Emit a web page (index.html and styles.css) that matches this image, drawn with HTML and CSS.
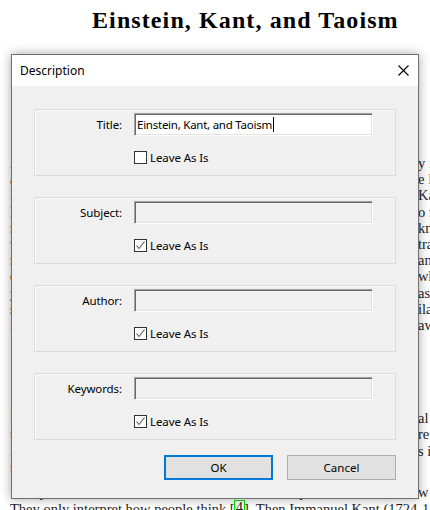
FILE: index.html
```html
<!DOCTYPE html>
<html>
<head>
<meta charset="utf-8">
<link rel="stylesheet" href="styles.css">
</head>
<body>
<div class="doc">
  <div class="doc-title">Einstein, Kant, and Taoism</div>
  <div class="doc-author">A. N. Author</div>
  <div class="abstract">
    <div class="ln"><span class="lead">Abstract. It is argued that the theory of relativity shows how the mind orders experience, and this is why</span><span>y in</span></div>
    <div class="ln"><span class="lead">ancient thinkers of the East arrived at a similar picture of the world long before the</span><span>e <span class="c1">I</span>n</span></div>
    <div class="ln"><span class="lead">Immanuel Kant described space and time as forms of intuition, and after him</span><span>Ka</span></div>
    <div class="ln"><span class="lead">Einstein showed that they are relative to the observer, who has to</span><span>o m</span></div>
    <div class="ln"><span class="lead">measure them; both rest on the observer's own structure of</span><span>kno</span></div>
    <div class="ln"><span class="lead">wledge, which the Taoist sages regarded as the key to an</span><span>tra</span></div>
    <div class="ln"><span class="lead">nsformation of the self and the world, one in which humans</span><span>an</span></div>
    <div class="ln"><span class="lead">d heaven are joined. This paper compares the three views, and shows</span><span>wh</span></div>
    <div class="ln"><span class="lead">y the philosophers of the West and the sages of the E</span><span>ast</span></div>
    <div class="ln"><span class="lead">share a common ground, which is found in the sim</span><span>ilar</span></div>
    <div class="ln"><span class="lead">ity of their methods and of the conclusions they dr</span><span>aw</span></div>
  </div>
  <div class="heading">1&nbsp;&nbsp;&nbsp;Introduction</div>
  <div class="para">
    <div class="ln"><span class="lead"><span class="c1">I</span>n the history of science, physicists often discover the laws that are actu</span><span>al</span></div>
    <div class="ln"><span class="lead"><span class="c2">t</span>he rules by which people think, and so their theories are mo</span><span>re</span></div>
    <div class="ln"><span class="lead"><span class="c3">I</span>n this sense, the theory of relativity i</span><span>s in</span></div>
    <div class="ln"><span class="lead"><span class="c2">t</span>he light of Kant's philosophy.</span></div>
  </div>
  <div class="para para2">
    <div class="ln"><span class="lead">&nbsp;&nbsp;&nbsp;&nbsp;Physicists do not describe the world as it is; they describe ho</span><span>w</span></div>
    <div class="ln">They only interpret how people think&nbsp;[<span class="cite">4</span>]. Then Immanuel Kant (1724-1804) said</div>
  </div>
</div>

<div class="dialog">
  <div class="titlebar">
    <span class="dlg-title">Description</span>
    <svg class="close" width="11" height="11" viewBox="0 0 11 11"><path d="M0.5 0.5 L10.5 10.5 M10.5 0.5 L0.5 10.5" stroke="#000" stroke-width="1.1" fill="none"/></svg>
  </div>
  <div class="dlg-body">
    <div class="group">
      <label class="lbl">Title:</label>
      <div class="field active">Einstein, Kant, and Taoism<span class="caret"></span></div>
      <div class="check-row">
        <span class="box"></span><span class="chk-label">Leave As Is</span>
      </div>
    </div>
    <div class="group">
      <label class="lbl">Subject:</label>
      <div class="field"></div>
      <div class="check-row">
        <span class="box"><svg width="11" height="11" viewBox="0 0 11 11"><path d="M1.5 5.5 L4 8.5 L9.5 1.5" stroke="#555" stroke-width="1.1" fill="none"/></svg></span><span class="chk-label">Leave As Is</span>
      </div>
    </div>
    <div class="group">
      <label class="lbl">Author:</label>
      <div class="field"></div>
      <div class="check-row">
        <span class="box"><svg width="11" height="11" viewBox="0 0 11 11"><path d="M1.5 5.5 L4 8.5 L9.5 1.5" stroke="#555" stroke-width="1.1" fill="none"/></svg></span><span class="chk-label">Leave As Is</span>
      </div>
    </div>
    <div class="group">
      <label class="lbl">Keywords:</label>
      <div class="field"></div>
      <div class="check-row">
        <span class="box"><svg width="11" height="11" viewBox="0 0 11 11"><path d="M1.5 5.5 L4 8.5 L9.5 1.5" stroke="#555" stroke-width="1.1" fill="none"/></svg></span><span class="chk-label">Leave As Is</span>
      </div>
    </div>
    <div class="buttons">
      <button class="btn btn-default">OK</button>
      <button class="btn">Cancel</button>
    </div>
  </div>
</div>
</body>
</html>
```

FILE: styles.css
```css
html, body {
  margin: 0;
  padding: 0;
  background: #fff;
  overflow: hidden;
  width: 430px;
  height: 510px;
}

.doc {
  position: relative;
  padding-left: 10px;
  font-family: "Liberation Serif", "Times New Roman", serif;
  font-size: 14.5px;
  color: #1e1e1e;
}

.doc-title {
  padding-top: 5px;
  margin-left: 82px;
  font-size: 24px;
  line-height: 30px;
  font-weight: bold;
  letter-spacing: 1.1px;
  white-space: nowrap;
  color: #000;
}

.doc-author {
  margin-top: 19px;
  margin-left: 205px;
  font-size: 14px;
  line-height: 16px;
  white-space: nowrap;
}

.abstract {
  margin-top: 85px;
}

.abstract .ln {
  line-height: 16.2px;
}

.ln {
  display: flex;
  white-space: nowrap;
  line-height: 16.6px;
}

.lead {
  display: block;
  width: 408px;
  flex: none;
  overflow: hidden;
}

.heading {
  margin-top: 45px;
  font-size: 17px;
  font-weight: bold;
  line-height: 20px;
}

.para {
  margin-top: 11.5px;
}

.para2 {
  margin-top: 8px;
}

.c1 { color: #c8781e; }
.c2 { color: #6a2a8a; }
.c3 { color: #8a1e3a; }

.cite {
  display: inline-block;
  outline: 1px solid #00e000;
  line-height: 12px;
  padding: 0 1px;
}

/* Dialog */
.dialog {
  position: absolute;
  left: 11px;
  top: 54px;
  width: 408px;
  height: 445px;
  box-sizing: border-box;
  border: 1px solid #6f6f6f;
  background: #f0f0f0;
  box-shadow: 0 0 10px rgba(0, 0, 0, 0.35);
  display: flex;
  flex-direction: column;
  font-family: "Noto Sans", "Open Sans", sans-serif;
  font-size: 11.5px;
  letter-spacing: -0.1px;
  color: #000;
}

.titlebar {
  height: 31px;
  flex: none;
  background: #fff;
  display: flex;
  align-items: center;
  justify-content: space-between;
  padding: 0 9px 0 8px;
}

.dlg-title {
  font-size: 12px;
  letter-spacing: 0;
}

.close {
  display: block;
}

.dlg-body {
  flex: 1;
  padding: 23px 22px 0 22px;
  display: flex;
  flex-direction: column;
  gap: 21px;
}

.group {
  height: 67px;
  box-sizing: border-box;
  border: 1px solid #dcdcdc;
  box-shadow: inset 1px 1px 0 #fafafa;
  display: grid;
  grid-template-columns: 87px 239px;
  grid-template-rows: 23px 13px;
  column-gap: 12px;
  row-gap: 15px;
  padding-top: 3px;
  align-items: center;
}

.lbl {
  text-align: right;
  white-space: nowrap;
}

.field {
  height: 23px;
  box-sizing: border-box;
  border-style: solid;
  border-width: 1px;
  border-color: #a0a0a0 #fff #fff #a0a0a0;
  box-shadow: inset 1px 1px 0 #696969, inset -1px -1px 0 #e3e3e3;
  background: #f0f0f0;
  padding: 0 2px;
  display: flex;
  align-items: center;
  white-space: nowrap;
  letter-spacing: -0.25px;
}

.field.active {
  background: #fff;
}

.caret {
  display: inline-block;
  width: 1px;
  height: 15px;
  background: #000;
  margin-left: 1px;
}

.check-row {
  grid-column: 2;
  display: flex;
  align-items: center;
  gap: 3px;
  height: 13px;
}

.box {
  width: 13px;
  height: 13px;
  box-sizing: border-box;
  border: 1px solid #333;
  background: #fff;
  display: flex;
  align-items: center;
  justify-content: center;
  flex: none;
}

.box svg {
  display: block;
}

.chk-label {
  white-space: nowrap;
}

.buttons {
  margin-top: -6px;
  display: flex;
  justify-content: flex-end;
  gap: 14px;
}

.btn {
  width: 109px;
  height: 25px;
  box-sizing: border-box;
  border: 1px solid #adadad;
  background: #e1e1e1;
  font-family: inherit;
  font-size: 11.5px;
  color: #000;
  padding: 0;
  margin: 0;
}

.btn-default {
  border: 2px solid #0078d7;
}
```
